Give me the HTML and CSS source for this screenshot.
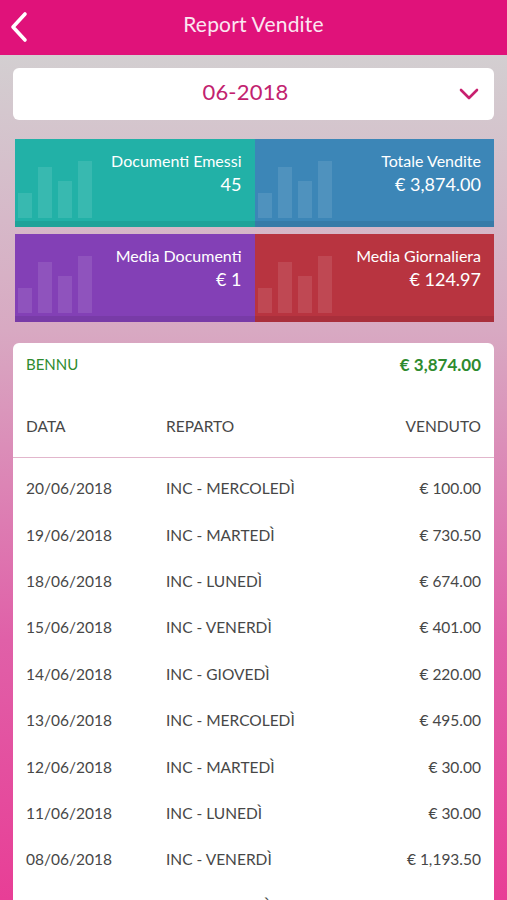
FILE: index.html
```html
<!DOCTYPE html>
<html lang="it">
<head>
    <meta charset="UTF-8">
    <meta name="viewport" content="width=device-width, initial-scale=1.0">
    <title>Report Vendite</title>
    <link rel="stylesheet" href="styles.css">
</head>
<body>

<div class="topbar">
    <a class="back" href="#">
        <svg width="20" height="32" viewBox="0 0 20 32"><polyline points="16,3 4,16 16,29" fill="none" stroke="#fff" stroke-width="3.6" stroke-linecap="round" stroke-linejoin="round"/></svg>
    </a>
    <h1>Report Vendite</h1>
</div>

<div class="page">
    <div class="picker">
        <span class="picker-value">06-2018</span>
        <svg class="picker-arrow" width="20" height="12" viewBox="0 0 20 12"><polyline points="2,2 10,10 18,2" fill="none" stroke="#c8206f" stroke-width="2.6" stroke-linecap="round" stroke-linejoin="round"/></svg>
    </div>

    <div class="tiles">
        <div class="tile teal">
            <div class="bars"><i class="b1"></i><i class="b2"></i><i class="b3"></i><i class="b4"></i></div>
            <div class="tile-text">
                <div class="tile-label">Documenti Emessi</div>
                <div class="tile-value">45</div>
            </div>
        </div>
        <div class="tile blue">
            <div class="bars"><i class="b1"></i><i class="b2"></i><i class="b3"></i><i class="b4"></i></div>
            <div class="tile-text">
                <div class="tile-label">Totale Vendite</div>
                <div class="tile-value">€ 3,874.00</div>
            </div>
        </div>
        <div class="tile purple">
            <div class="bars"><i class="b1"></i><i class="b2"></i><i class="b3"></i><i class="b4"></i></div>
            <div class="tile-text">
                <div class="tile-label">Media Documenti</div>
                <div class="tile-value">€ 1</div>
            </div>
        </div>
        <div class="tile red">
            <div class="bars"><i class="b1"></i><i class="b2"></i><i class="b3"></i><i class="b4"></i></div>
            <div class="tile-text">
                <div class="tile-label">Media Giornaliera</div>
                <div class="tile-value">€ 124.97</div>
            </div>
        </div>
    </div>

    <div class="report">
        <div class="summary">
            <span>BENNU</span>
            <span class="summary-total">€ 3,874.00</span>
        </div>
        <div class="row head">
            <span class="c-date">DATA</span>
            <span class="c-dept">REPARTO</span>
            <span class="c-sold">VENDUTO</span>
        </div>
        <div class="rows" id="rows"></div>
    </div>
</div>

<script>
    const sales = [
        ["20/06/2018", "INC - MERCOLEDÌ", "€ 100.00"],
        ["19/06/2018", "INC - MARTEDÌ", "€ 730.50"],
        ["18/06/2018", "INC - LUNEDÌ", "€ 674.00"],
        ["15/06/2018", "INC - VENERDÌ", "€ 401.00"],
        ["14/06/2018", "INC - GIOVEDÌ", "€ 220.00"],
        ["13/06/2018", "INC - MERCOLEDÌ", "€ 495.00"],
        ["12/06/2018", "INC - MARTEDÌ", "€ 30.00"],
        ["11/06/2018", "INC - LUNEDÌ", "€ 30.00"],
        ["08/06/2018", "INC - VENERDÌ", "€ 1,193.50"],
        ["07/06/2018", "INC - GIOVEDÌ", "€ 310.00"]
    ];

    const rows = document.getElementById("rows");
    sales.forEach(s => {
        const row = document.createElement("div");
        row.classList.add("row");
        row.innerHTML = `
            <span class="c-date">${s[0]}</span>
            <span class="c-dept">${s[1]}</span>
            <span class="c-sold">${s[2]}</span>
        `;
        rows.appendChild(row);
    });
</script>
</body>
</html>
```

FILE: styles.css
```css
body {
    margin: 0;
    font-family: Lato, "Open Sans", sans-serif;
    color: #444;
    height: 900px;
    overflow: hidden;
    background: linear-gradient(to bottom, #d3cfd1 55px, #d8a9c2 330px, #e060a8 640px, #e83e96 900px);
}
.topbar {
    height: 55px;
    background: #e0127a;
    display: flex;
    align-items: center;
    justify-content: center;
    position: relative;
}
.topbar h1 {
    margin: 0 0 8px;
    font-size: 21px;
    font-weight: 400;
    color: #fbe6f1;
    letter-spacing: 0.2px;
}
.back {
    position: absolute;
    left: 9px;
    top: 11px;
    display: block;
    line-height: 0;
}
.page {
    padding: 13px 13px 0;
}
.picker {
    height: 52px;
    background: #fff;
    border-radius: 6px;
    display: flex;
    align-items: center;
    justify-content: center;
    padding-right: 16px;
    position: relative;
}
.picker-value {
    font-size: 22px;
    color: #c2226f;
    letter-spacing: 0.2px;
    margin-bottom: 6px;
}
.picker-arrow {
    position: absolute;
    right: 15px;
    top: 20px;
}
.tiles {
    margin: 19px 0 0 2px;
    display: grid;
    grid-template-columns: 1fr 1fr;
    row-gap: 7px;
}
.tile {
    height: 88px;
    position: relative;
    box-shadow: inset 0 -6px 0 rgba(0, 0, 0, 0.08);
    display: flex;
    justify-content: flex-end;
}
.teal { background: #22b1a7; }
.blue { background: #3c86b7; }
.purple { background: #8340b6; }
.red { background: #b83440; }
.bars {
    position: absolute;
    left: 3px;
    bottom: 9px;
    display: flex;
    align-items: flex-end;
    gap: 6px;
}
.bars i {
    display: block;
    width: 14px;
    background: rgba(255, 255, 255, 0.1);
}
.bars .b1 { height: 25px; }
.bars .b2 { height: 51px; }
.bars .b3 { height: 37px; }
.bars .b4 { height: 57px; }
.tile-text {
    text-align: right;
    color: #fff;
    padding: 11px 13px 0 0;
}
.tile-label {
    font-size: 16px;
    line-height: 21px;
}
.tile-value {
    font-size: 18px;
    line-height: 24px;
    margin-top: 1px;
}
.report {
    margin-top: 21px;
    background: #fff;
    border-radius: 6px 6px 0 0;
    height: 600px;
}
.summary {
    height: 42px;
    display: flex;
    align-items: center;
    justify-content: space-between;
    padding: 0 13px;
    color: #2e8b2e;
    font-size: 15px;
}
.summary-total {
    font-size: 17px;
    font-weight: 700;
}
.row {
    height: 46.4px;
    display: flex;
    align-items: center;
    padding: 0 13px;
    font-size: 15.5px;
    color: #474747;
}
.row.head {
    height: 73px;
    align-items: flex-start;
    box-sizing: border-box;
    padding-top: 30px;
    line-height: 22px;
    border-bottom: 1.5px solid #e2b6cc;
}
.rows {
    padding-top: 7px;
}
.c-date {
    width: 140px;
}
.c-dept {
    flex: 1;
}
.c-sold {
    text-align: right;
}
```
